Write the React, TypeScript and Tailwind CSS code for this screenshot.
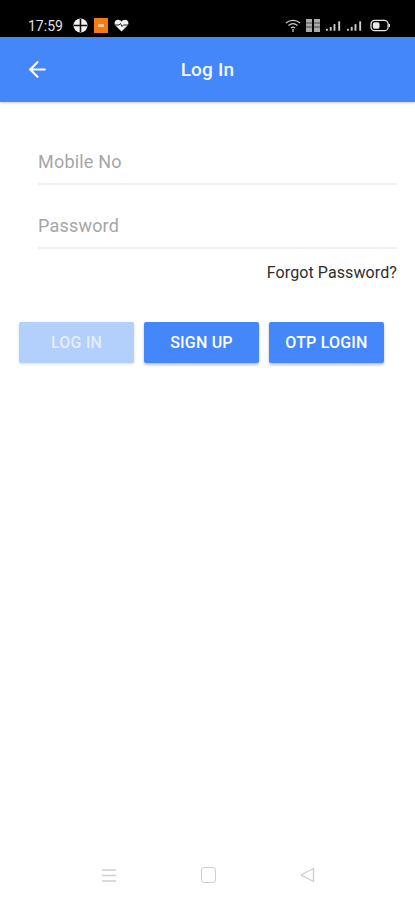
import { ArrowLeft } from "lucide-react"

function StatusIcons() {
    return (
        <div className="flex items-center ml-[10px] gap-[6px]">
            {/* round app icon */}
            <svg width="15" height="15" viewBox="0 0 15 15">
                <circle cx="7.5" cy="7.5" r="7" fill="#f2f2f2" />
                <path d="M7.5 1v13M1 7.5h13" stroke="#111" strokeWidth="1.6" />
            </svg>
            <div className="w-[14px] h-[15px] bg-[#f57c14] flex items-center justify-center">
                <div className="w-[6px] h-[3px] bg-[#ffc48a]" />
            </div>
            <svg width="15" height="13" viewBox="0 0 15 13">
                <path d="M7.5 12.5 1.2 6.2C-.4 3.8 1.2.8 4 .8c1.500 0 2.700.7 3.500 1.900C8.300 1.500 9.500.8 11 .8c2.800 0 4.400 3 2.800 5.400z" fill="#f2f2f2" />
                <path d="M1 6h4l1.500-1.500L8 7.500 9.500 6H14" stroke="#222" strokeWidth="1" fill="none" />
            </svg>
        </div>
    )
}

function Signal() {
    return (
        <svg width="16" height="12" viewBox="0 0 17 12">
            <rect x="0" y="9" width="2" height="2" fill="#ccc" />
            <rect x="4" y="7" width="2" height="4" fill="#ccc" />
            <rect x="8" y="4" width="2" height="7" fill="#ccc" />
            <rect x="13" y="1" width="2" height="10" fill="#ccc" />
        </svg>
    )
}

function StatusBar() {
    return (
        <div className="h-[37px] bg-black flex items-center pl-[28px] pr-[25px] pt-[14px] shrink-0">
            <span className="text-[14px] leading-none text-[#e0e0e0]">17:59</span>
            <StatusIcons />
            <div className="flex items-center ml-auto gap-[5px]">
                <svg width="16" height="13" viewBox="0 0 16 13" fill="none" stroke="#ccc" strokeWidth="1.300">
                    <path d="M1 4c4-3.500 10-3.500 14 0M3.500 6.500c2.700-2.200 6.300-2.200 9 0M6 9c1.200-1 2.800-1 4 0" />
                    <path d="M8 10v3" />
                </svg>
                <svg width="15" height="13" viewBox="0 0 15 13" fill="#aaa">
                    <rect x="0" y="0" width="6" height="13" />
                    <rect x="8" y="0" width="6" height="13" />
                    <path d="M0 4h6M0 8h6M8 4h6M8 8h6" stroke="#444" strokeWidth="1" />
                </svg>
                <Signal />
                <Signal />
                <svg width="20" height="13" viewBox="0 0 21 13" className="ml-[2px]">
                    <rect x="1" y="1" width="18" height="11" rx="4" fill="none" stroke="#e8e8e8" strokeWidth="1.300" />
                    <rect x="3" y="3" width="7" height="7" rx="2" fill="#e8e8e8" />
                    <rect x="19.500" y="5" width="1.500" height="3" fill="#e8e8e8" />
                </svg>
            </div>
        </div>
    )
}

function Field({ label }: { label: string }) {
    return (
        <div className="h-[64px] flex flex-col justify-end">
            <div className="h-[42px] border-b-2 border-[#f2f2f2] text-[18px] leading-[24px] text-[#a6a6a6] tracking-[0.2px] pt-[7px]">
                {label}
            </div>
        </div>
    )
}

function ActionButton({ label, disabled }: { label: string; disabled?: boolean }) {
    return (
        <button
            className={
                disabled
                    ? "w-[115px] h-[41px] rounded-[2px] bg-[#b3cffb] text-[#e4eefe] text-[16px] tracking-[0.2px] font-medium shadow-[0_1px_3px_rgba(0,0,0,0.15)]"
                    : "w-[115px] h-[41px] rounded-[2px] bg-[#4487fb] text-white text-[16px] tracking-[0.2px] font-medium shadow-[0_2px_3px_rgba(0,0,0,0.25)]"
            }
        >
            {label}
        </button>
    )
}

function App() {
    return (
        <div className="w-[415px] h-[900px] bg-white flex flex-col font-['Roboto',sans-serif] overflow-hidden">
            <StatusBar />
            <div className="h-[65px] bg-[#4487fb] relative flex items-center justify-center shrink-0 shadow-[0_1px_3px_rgba(0,0,0,0.2)]">
                <ArrowLeft size={25} color="#fff" strokeWidth={2} className="absolute left-[25px] top-[20px]" />
                <h1 className="text-[19px] tracking-[0.2px] font-medium text-[#f4f8ff] pt-[2px]">Log In</h1>
            </div>
            <div className="pl-[38px] pr-[18px] pt-[19px]">
                <Field label="Mobile No" />
                <Field label="Password" />
                <div className="text-right text-[16px] leading-[20px] tracking-[0.1px] text-[#2e2e2e] mt-[14px]">Forgot Password?</div>
            </div>
            <div className="flex gap-[10px] pl-[19px] mt-[39px]">
                <ActionButton label="LOG IN" disabled />
                <ActionButton label="SIGN UP" />
                <ActionButton label="OTP LOGIN" />
            </div>
            <div className="mt-auto h-[50px] flex items-center">
                <div className="flex items-center w-full pl-[101px] pr-[100px] justify-between">
                    <svg width="16" height="15" viewBox="0 0 16 15" stroke="#cfcfcf" strokeWidth="1.500">
                        <path d="M1 2h14M1 7.500h14M1 13h14" />
                    </svg>
                    <div className="w-[15px] h-[16px] rounded-[3px] border-[1.500px] border-[#cfcfcf]" />
                    <svg width="16" height="16" viewBox="0 0 16 16" fill="none" stroke="#cfcfcf" strokeWidth="1.400">
                        <path d="M14.500 1.500v13L2 8z" strokeLinejoin="round" />
                    </svg>
                </div>
            </div>
        </div>
    )
}

export default App
